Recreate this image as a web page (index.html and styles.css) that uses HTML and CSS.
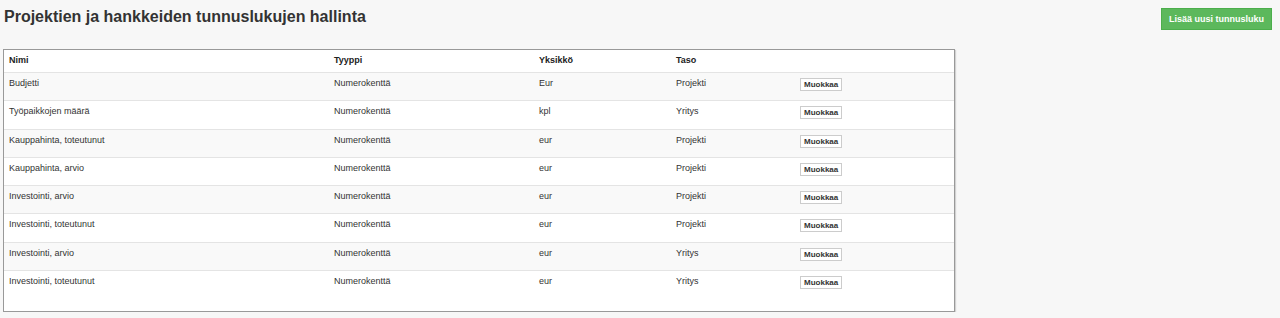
FILE: index.html
```html
<!DOCTYPE html>
<html lang="fi">
<head>
    <meta charset="UTF-8">
    <title>Tunnuslukujen hallinta</title>
    <link rel="stylesheet" href="styles.css">
</head>
<body>
    <div class="header">
        <h1>Projektien ja hankkeiden tunnuslukujen hallinta</h1>
        <button class="btn-add">Lisää uusi tunnusluku</button>
    </div>

    <div class="box">
        <table class="list">
            <thead>
                <tr>
                    <th class="col-name">Nimi</th>
                    <th class="col-type">Tyyppi</th>
                    <th class="col-unit">Yksikkö</th>
                    <th class="col-level">Taso</th>
                    <th></th>
                </tr>
            </thead>
            <tbody>
                <tr><td>Budjetti</td><td>Numerokenttä</td><td>Eur</td><td>Projekti</td><td><button class="btn-edit">Muokkaa</button></td></tr>
                <tr><td>Työpaikkojen määrä</td><td>Numerokenttä</td><td>kpl</td><td>Yritys</td><td><button class="btn-edit">Muokkaa</button></td></tr>
                <tr><td>Kauppahinta, toteutunut</td><td>Numerokenttä</td><td>eur</td><td>Projekti</td><td><button class="btn-edit">Muokkaa</button></td></tr>
                <tr><td>Kauppahinta, arvio</td><td>Numerokenttä</td><td>eur</td><td>Projekti</td><td><button class="btn-edit">Muokkaa</button></td></tr>
                <tr><td>Investointi, arvio</td><td>Numerokenttä</td><td>eur</td><td>Projekti</td><td><button class="btn-edit">Muokkaa</button></td></tr>
                <tr><td>Investointi, toteutunut</td><td>Numerokenttä</td><td>eur</td><td>Projekti</td><td><button class="btn-edit">Muokkaa</button></td></tr>
                <tr><td>Investointi, arvio</td><td>Numerokenttä</td><td>eur</td><td>Yritys</td><td><button class="btn-edit">Muokkaa</button></td></tr>
                <tr><td>Investointi, toteutunut</td><td>Numerokenttä</td><td>eur</td><td>Yritys</td><td><button class="btn-edit">Muokkaa</button></td></tr>
            </tbody>
        </table>
    </div>
</body>
</html>
```

FILE: styles.css
```css
body {
    font-family: "Liberation Sans", Arial, sans-serif;
    background-color: #f7f7f7;
    color: #333;
    margin: 0;
    padding: 0 8px 0 3px;
}
.header {
    display: flex;
    justify-content: space-between;
    align-items: flex-start;
    height: 49px;
}
h1 {
    margin: 8px 0 0 1px;
    font-size: 16px;
    font-weight: bold;
    color: #333;
}
.btn-add {
    margin-top: 8px;
    height: 22px;
    width: 111px;
    padding: 0;
    background-color: #5cb85c;
    border: 1px solid #4cae4c;
    color: white;
    font-family: inherit;
    font-size: 9px;
    font-weight: bold;
    cursor: pointer;
}
.box {
    width: 950px;
    height: 261px;
    background: white;
    border: 1px solid #999;
    box-shadow: 1px 1px 1px rgba(0, 0, 0, 0.15);
}
.list {
    width: 100%;
    border-collapse: collapse;
    font-size: 9px;
}
.list th, .list td {
    text-align: left;
    vertical-align: top;
    padding: 5px 5px 0 5px;
}
.list th {
    height: 17px;
    font-weight: bold;
    color: #222;
}
.list td {
    height: 22.3px;
    border-top: 1px solid #e4e4e4;
    color: #333;
}
.list tbody tr:nth-child(odd) {
    background: #f9f9f9;
}
.col-name { width: 315px; }
.col-type { width: 195px; }
.col-unit { width: 127px; }
.col-level { width: 114px; }
.btn-edit {
    margin-top: 0;
    padding: 1px 3px;
    background: white;
    border: 1px solid #ccc;
    font-family: inherit;
    font-size: 8px;
    font-weight: bold;
    color: #333;
}
```
